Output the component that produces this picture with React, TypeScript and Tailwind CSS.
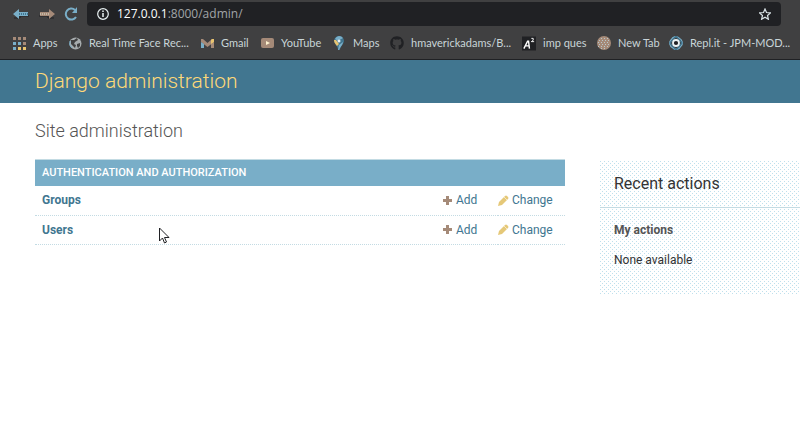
import React from "react";
import { FaGithub } from "react-icons/fa";

function Arrow({ flip, color, shaft }: { flip?: boolean; color: string; shaft: string }) {
  return (
    <svg viewBox="0 0 16 12" className={flip ? "h-3 w-4 -scale-x-100" : "h-3 w-4"} aria-hidden="true">
      <path d="M1 10h6V8h9" fill="none" stroke="#202124" />
      <path d="M0 6 6 1v3h9v4H6v3z" fill={color} />
      <path d="M6 6h9" stroke={shaft} strokeWidth="2" strokeDasharray="1 1" />
    </svg>
  );
}

function AppsIcon() {
  const colors = ["#a58a78", "#a58a78", "#a58a78", "#79aec8", "#79aec8", "#a58a78", "#79aec8", "#e9c46f", "#e9c46f"];
  return (
    <svg viewBox="0 0 13 13" className="size-[13px]" aria-hidden="true">
      {colors.map((c, i) => (
        <rect key={i} x={(i % 3) * 5} y={Math.floor(i / 3) * 5} width="3" height="3" fill={c} />
      ))}
    </svg>
  );
}

function GlobeIcon() {
  return (
    <svg viewBox="0 0 13 13" className="size-[13px]" aria-hidden="true">
      <circle cx="6.5" cy="6.5" r="6" fill="#a7acae" />
      <path d="M2 3h3l3-2 1 2-3 2-1 2 2 1-1 3-2-2-2-2zM8 7l3-1v3l-2 2-1-2z" fill="#404041" />
      <path d="M1 4a6 6 0 0 0 2 7" fill="none" stroke="#79aec8" />
    </svg>
  );
}

function GmailIcon() {
  return (
    <svg viewBox="0 0 13 11" className="h-[11px] w-[13px]" aria-hidden="true">
      <path d="M0 1h2l4.500 4L11 1h2v3L6.500 9 0 4z" fill="#a58a78" />
      <path d="M0 4l3 2v4H0z" fill="#79aec8" />
      <path d="M10 6l3-2v6h-3z" fill="#a58a78" />
      <path d="M10 2l1-1h2v3l-3 2z" fill="#e9c46f" />
    </svg>
  );
}

function YouTubeIcon() {
  return (
    <svg viewBox="0 0 13 10" className="h-[10px] w-[13px]" aria-hidden="true">
      <rect width="13" height="10" rx="2" fill="#a58a78" />
      <path d="M5 3l4 2-4 2z" fill="#fff3d0" />
    </svg>
  );
}

function MapsIcon() {
  return (
    <svg viewBox="0 0 10 14" className="h-[14px] w-[10px]" aria-hidden="true">
      <path d="M5 0a5 5 0 0 1 5 5c0 3-4 5-4 9H4C4 10 0 8 0 5a5 5 0 0 1 5-5z" fill="#417690" />
      <path d="M5 0a5 5 0 0 1 4 2L4 5 1 3a5 5 0 0 1 4-3zM9 6c0 3-3 5-4 8H4l1-5z" fill="#79aec8" />
      <path d="M0 4l2 0 3 4-2 2C2 8 0 7 0 4z" fill="#e9c46f" />
      <circle cx="5" cy="5" r="1.500" fill="#e9f2f4" />
    </svg>
  );
}

function SquareAIcon() {
  return (
    <svg viewBox="0 0 15 15" className="size-[15px]" aria-hidden="true">
      <rect width="15" height="15" fill="#202124" />
      <path d="M2 13l4-8h1l1 8M4 10h4" fill="none" stroke="#fff" strokeWidth="1.500" />
      <path d="M10 2h2v2l-2 1.500h3" fill="none" stroke="#fff" />
    </svg>
  );
}

function TabIcon() {
  return (
    <svg viewBox="0 0 14 14" className="size-[14px]" aria-hidden="true">
      <circle cx="7" cy="7" r="7" fill="#a58a78" />
      <path
        d="M4 2.500h7M2 4.500h10M1 6.500h12M2 8.500h11M1 10.500h11M4 12.500h6"
        stroke="#b9c6c9"
        strokeDasharray="1 2"
      />
    </svg>
  );
}

function ReplIcon() {
  return (
    <svg viewBox="0 0 14 14" className="size-[14px]" fill="none" strokeWidth="1.300" aria-hidden="true">
      <path d="M2 4C4 0 8 0 10 2M10 2c4 2 4 6 2 8M12 10c-2 4-6 4-8 2M4 12c-4-2-4-6-2-8" stroke="#79aec8" />
      <path d="M7 0l6 7-6 7-6-7z" stroke="#417690" />
      <circle cx="7" cy="7" r="3" fill="#202124" stroke="#e9f2f4" strokeWidth="1.800" />
    </svg>
  );
}

const bookmarks = [
  { label: "Apps", icon: <AppsIcon />, box: "w-14" },
  { label: "Real Time Face Rec...", icon: <GlobeIcon />, box: "w-[132px]" },
  { label: "Gmail", icon: <GmailIcon />, box: "w-[60px]" },
  { label: "YouTube", icon: <YouTubeIcon />, box: "w-[72px]" },
  { label: "Maps", icon: <MapsIcon />, box: "w-[58px]" },
  { label: "hmaverickadams/B...", icon: <FaGithub className="size-[14px] text-[#202124]" />, box: "w-[132px]" },
  { label: "imp ques", icon: <SquareAIcon />, box: "w-[75px]" },
  { label: "New Tab", icon: <TabIcon />, box: "w-[72px]" },
  { label: "Repl.it - JPM-MOD...", icon: <ReplIcon />, box: "" },
];

function Browser() {
  return (
    <div className="h-[60px] border-b border-[#202124] bg-[#404041]">
      <div className="flex items-center pt-[2px] pr-[19px] pl-[13px]">
        <div className="flex w-[74px] items-center justify-between pr-[9px]">
          <button aria-label="Back"><Arrow color="#79aec8" shaft="#417690" /></button>
          <button aria-label="Forward"><Arrow flip color="#a58a78" shaft="#c3b7a4" /></button>
          <button aria-label="Reload">
            <svg viewBox="0 0 14 14" className="size-[14px]" fill="none" stroke="#79aec8" strokeWidth="2" aria-hidden="true">
              <path d="M12 10a5.500 5.500 0 1 1-1-7" />
              <path d="M13 0v6H8z" fill="#79aec8" stroke="none" />
            </svg>
          </button>
        </div>
        <div className="relative h-6 min-w-0 grow">
          <input
            aria-label="Address"
            defaultValue="127.0.0.1:8000/admin/"
            className="size-full rounded-sm bg-[#202124] pl-[30px] text-[12px] text-transparent outline-none"
          />
          <div className="pointer-events-none absolute inset-0 flex items-center gap-2 px-[10px]">
            <svg viewBox="0 0 12 12" className="size-[12px]" fill="none" stroke="#e9f2f4" aria-hidden="true">
              <circle cx="6" cy="6" r="5.300" strokeWidth="1.200" />
              <path d="M6 5v4M6 2.500v1.500" strokeWidth="1.500" />
            </svg>
            <span className="grow font-['Open_Sans',sans-serif] text-[12px] text-[#a0a5a8]" aria-hidden="true">
              <span className="text-white">127.0.0.1</span>:8000/admin/
            </span>
            <svg viewBox="0 0 12 12" className="size-[12px]" fill="none" stroke="#d9e3e6" strokeWidth="1.200" aria-hidden="true">
              <path d="M6 1l1.500 3.500 4 .4-3 2.600.9 3.800L6 9.300l-3.400 2 .9-3.800-3-2.600 4-.4z" />
            </svg>
          </div>
        </div>
      </div>
      <nav aria-label="Bookmarks" className="flex h-[33px] items-center pt-px pl-3 font-[Lato,sans-serif] text-[11px] text-[#c9d5d8]">
        {bookmarks.map((b) => (
          <a key={b.label} href="#" className={`${b.box} flex shrink-0 items-center gap-[7px] whitespace-nowrap`}>
            <span className="flex w-[14px] shrink-0 justify-center">{b.icon}</span>
            {b.label}
          </a>
        ))}
      </nav>
    </div>
  );
}

function ModelRow({ name }: { name: string }) {
  return (
    <tr className="h-[29px] border-b border-dotted border-[#c3dbe3] text-[#417690]">
      <th scope="row" className="pl-[7px] text-left font-bold"><a href="#">{name}</a></th>
      <td className="w-[55px]">
        <a href="#" className="flex items-center gap-1">
          <svg viewBox="0 0 9 9" className="size-[9px]" aria-hidden="true"><path d="M3 0h3v3h3v3H6v3H3V6H0V3h3z" fill="#a58a78" /></svg>
          Add
        </a>
      </td>
      <td className="w-[67px]">
        <a href="#" className="flex items-center gap-[3px]">
          <svg viewBox="0 0 11 11" className="size-[11px]" aria-hidden="true"><path d="M0 11l1-4 6-6q1-1 2 0l1 1q1 1 0 2l-6 6z" fill="#e5c878" /><path d="M6 2l3 3" stroke="#f6e8c4" /></svg>
          Change
        </a>
      </td>
    </tr>
  );
}

export default function App() {
  return (
    <div className="relative min-h-screen overflow-hidden bg-white font-[Roboto,sans-serif] text-[12px] text-[#333]">
      <Browser />
      <header className="flex h-[43px] items-center bg-[#417690] px-[35px] pt-px">
        <h1 className="text-[21px] font-light text-[#ffd978]"><a href="#">Django administration</a></h1>
      </header>
      <main className="pt-4 pl-[35px]">
        <h2 className="text-[18px] leading-6 font-light text-[#555]">Site administration</h2>
        <div className="mt-4 flex items-start gap-[35px]">
          <section className="min-w-0 grow">
            <table className="w-full border-collapse">
              <caption className="h-[27px] border-t border-[#c3dbe3] bg-[#79aec8] pl-[7px] text-left text-[11px] leading-[26px] font-medium text-white uppercase">
                <a href="#">Authentication and Authorization</a>
              </caption>
              <tbody>
                <ModelRow name="Groups" />
                <ModelRow name="Users" />
              </tbody>
            </table>
          </section>
          <aside className="mt-[2px] h-[133px] w-[200px] shrink-0 bg-white bg-[conic-gradient(from_270deg_at_1px_1px,#bfe0ec_90deg,transparent_0),conic-gradient(from_270deg_at_1px_1px,#bfe0ec_90deg,transparent_0)] bg-[length:4px_4px] bg-[position:0_0,2px_2px]">
            <h2 className="flex h-[47px] items-center border-b border-[#c3dbe3] pl-[14px] text-[16px]">Recent actions</h2>
            <h3 className="mt-[14px] pl-[14px] leading-4 font-bold text-[#555]">My actions</h3>
            <p className="mt-[14px] pl-[14px] leading-4">None available</p>
          </aside>
        </div>
      </main>
      <svg viewBox="0 0 11 17" className="pointer-events-none absolute top-[227px] left-[159px] h-[17px] w-[11px]" aria-hidden="true">
        <path d="M.5 1v13l3-3 2 5 2-1-2-4.500h4.500z" fill="#fff" stroke="#202124" />
      </svg>
    </div>
  );
}
